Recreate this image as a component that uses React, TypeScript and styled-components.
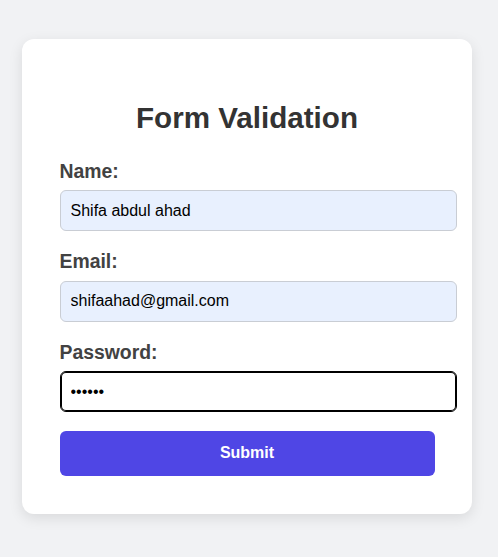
import React from "react";
import styled, { createGlobalStyle } from "styled-components";

const GlobalStyle = createGlobalStyle`
  html, body {
    margin: 0;
    padding: 0;
    background: #f1f2f4;
    font-family: "Liberation Sans", Arial, sans-serif;
  }
  * { box-sizing: border-box; }
`;

const Page = styled.div`
  min-height: 557px;
  padding: 39px 0 0 22px;
  display: flex;
  align-items: flex-start;
`;

const Card = styled.form`
  width: 450px;
  padding: 38px 37.5px;
  background: #ffffff;
  border-radius: 12px;
  box-shadow: 0 4px 14px rgba(0, 0, 0, 0.1);
`;

const Title = styled.h2`
  margin: 24.3px 0;
  font-size: 29.6px;
  font-weight: 700;
  line-height: normal;
  color: #333333;
  text-align: center;
`;

const Group = styled.div`
  display: flex;
  flex-direction: column;
  margin-bottom: 19px;
`;

const LastGroup = styled(Group)`
  margin-bottom: 18.5px;
`;

const Label = styled.label`
  display: block;
  font-size: 19.4px;
  font-weight: 700;
  line-height: 22px;
  color: #424242;
  margin-bottom: 8.5px;
`;

const Input = styled.input<{ $autofilled?: boolean; $focused?: boolean }>`
  width: 397px;
  height: 41px;
  padding: 0 10px;
  font-family: "Liberation Sans", Arial, sans-serif;
  font-size: 16px;
  color: #000000;
  border-radius: 6px;
  border: 1px solid ${(p) => (p.$focused ? "#000000" : "#c9cdd4")};
  box-shadow: ${(p) => (p.$focused ? "inset 0 0 0 1px #000000" : "none")};
  background: ${(p) => (p.$autofilled ? "#e8f0fe" : "#ffffff")};
  outline: none;
`;

const SubmitButton = styled.button`
  width: 100%;
  height: 45px;
  border: none;
  border-radius: 6px;
  background: #4f46e5;
  color: #ffffff;
  font-family: "Liberation Sans", Arial, sans-serif;
  font-size: 16px;
  font-weight: 700;
  cursor: pointer;
`;

export default function App() {
  return (
    <>
      <GlobalStyle />
      <Page>
        <Card onSubmit={(e) => e.preventDefault()}>
          <Title>Form Validation</Title>
          <Group>
            <Label htmlFor="name">Name:</Label>
            <Input id="name" type="text" defaultValue="Shifa abdul ahad" $autofilled />
          </Group>
          <Group>
            <Label htmlFor="email">Email:</Label>
            <Input id="email" type="email" defaultValue="shifaahad@gmail.com" $autofilled />
          </Group>
          <LastGroup>
            <Label htmlFor="password">Password:</Label>
            <Input id="password" type="password" defaultValue="123456" $focused />
          </LastGroup>
          <SubmitButton type="submit">Submit</SubmitButton>
        </Card>
      </Page>
    </>
  );
}
